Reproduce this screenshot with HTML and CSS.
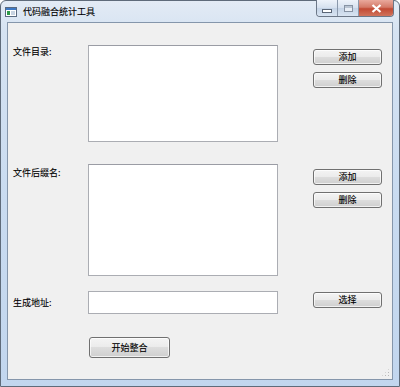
FILE: index.html
```html
<!DOCTYPE html>
<html>
<head>
<meta charset="utf-8">
<link rel="stylesheet" href="styles.css">
</head>
<body>
<div class="window">
  <div class="titlebar">
    <svg class="appicon" width="12" height="10" viewBox="0 0 12 10">
      <rect x="0.5" y="0.5" width="11" height="9" fill="#fff" stroke="#5a6a80"/>
      <rect x="1" y="1" width="10" height="2" fill="#3f79c4"/>
      <rect x="2" y="4" width="3" height="4" fill="#2e9a48"/>
      <rect x="6" y="4" width="4" height="4" fill="#c8d4e2"/>
    </svg>
    <span class="title">代码融合统计工具</span>
    <div class="caption">
      <div class="cbtn min"><span class="glyph-min"></span></div>
      <div class="cbtn max"><span class="glyph-max"></span></div>
      <div class="cbtn close">
        <svg width="11" height="9" viewBox="0 0 11 9"><path d="M1.5 1 L9.5 8 M9.5 1 L1.5 8" stroke="#fff" stroke-width="2.2"/></svg>
      </div>
    </div>
  </div>
  <div class="client">
    <div class="form">
      <div class="row row1">
        <div class="label l1">文件目录:</div>
        <div class="listbox"></div>
        <div class="btns b1">
          <div class="btn">添加</div>
          <div class="btn">删除</div>
        </div>
      </div>

      <div class="row row2">
        <div class="label l2">文件后缀名:</div>
        <div class="listbox"></div>
        <div class="btns b2">
          <div class="btn">添加</div>
          <div class="btn">删除</div>
        </div>
      </div>

      <div class="row row3">
        <div class="label l3">生成地址:</div>
        <div class="lineedit"></div>
        <div class="btns b3">
          <div class="btn">选择</div>
        </div>
      </div>

      <div class="row row4">
        <div class="btn start">开始整合</div>
      </div>
    </div>
    <div class="grip"></div>
  </div>
</div>
</body>
</html>
```
FILE: styles.css
```css
html, body {
  margin: 0;
  padding: 0;
  width: 400px;
  height: 387px;
  overflow: hidden;
  background: #ffffff;
}
body {
  font-family: "Noto Sans CJK SC", "Noto Sans", sans-serif;
  font-size: 9px;
  color: #000;
  -webkit-text-stroke: 0.1px #000;
}
.window {
  box-sizing: border-box;
  width: 400px;
  height: 387px;
  border: 1px solid #5f6b7a;
  border-radius: 6px 6px 0 0;
  background: linear-gradient(to bottom, #e3ebf5 0px, #d6e3f2 30px, #c9dbf0 200px, #c2d6ee 387px);
  display: flex;
  flex-direction: column;
  position: relative;
}
.titlebar {
  height: 20px;
  display: flex;
  align-items: center;
  position: relative;
}
.appicon {
  margin-left: 4px;
  margin-top: 1px;
}
.title {
  margin-left: 6px;
  font-size: 9px;
  line-height: 12px;
  color: #000;
  margin-top: 1px;
}
.caption {
  position: absolute;
  right: 5px;
  top: -1px;
  display: flex;
  height: 16px;
  border: 1px solid #6c7787;
  border-top: none;
  border-radius: 0 0 4px 4px;
  overflow: hidden;
}
.cbtn {
  display: flex;
  align-items: center;
  justify-content: center;
  height: 16px;
}
.min, .max {
  width: 20px;
  background: linear-gradient(to bottom, #eef3fa 0%, #d5e0ee 50%, #c4d3e6 51%, #d8e4f2 100%);
  border-right: 1px solid #8a98ab;
}
.glyph-min {
  width: 8px;
  height: 2px;
  background: #fff;
  border: 1px solid #5b6677;
  margin-top: 5px;
}
.glyph-max {
  width: 7px;
  height: 5px;
  border: 1px solid #8793a4;
  background: #e8eef6;
  box-shadow: inset 0 2px 0 #b9c4d2;
}
.close {
  width: 34px;
  background: linear-gradient(to bottom, #e9a99c 0%, #d47a68 45%, #c24a34 55%, #d0735c 100%);
}
.client {
  margin: 1px 6px 6px 6px;
  flex: 1;
  background: #f0f0f0;
  border: 1px solid #8596ab;
  position: relative;
}
.form {
  display: flex;
  flex-direction: column;
  padding: 22px 0 0 5px;
}
.row {
  display: grid;
  grid-template-columns: 75px 190px 35px 69px;
  grid-template-areas: "lab box . btn";
}
.row1 { height: 97px; }
.row2 { height: 112px; margin-top: 22px; }
.row3 { height: 23px; margin-top: 15px; }
.row4 { height: 21px; margin-top: 23px; }
.label {
  grid-area: lab;
  font-size: 9px;
  line-height: 12px;
  color: #000;
}
.l1 { padding-top: 1px; }
.l2 { padding-top: 3px; }
.l3 { align-self: center; }
.listbox {
  grid-area: box;
  box-sizing: border-box;
  background: #fff;
  border: 1px solid #abadb3;
  border-top-color: #9a9ca4;
}
.lineedit {
  grid-area: box;
  box-sizing: border-box;
  background: #fff;
  border: 1px solid #abadb3;
}
.btns {
  grid-area: btn;
  display: flex;
  flex-direction: column;
  gap: 7px;
}
.b1 { padding-top: 4px; }
.b2 { padding-top: 5px; }
.b3 { padding-top: 1px; }
.btn {
  box-sizing: border-box;
  height: 16px;
  border: 1px solid #707070;
  border-radius: 3px;
  background: linear-gradient(to bottom, #f4f4f4 0%, #ebebeb 49%, #dddddd 50%, #cfcfcf 100%);
  box-shadow: inset 0 0 0 1px rgba(255,255,255,0.7);
  display: flex;
  align-items: center;
  justify-content: center;
  font-size: 9px;
  line-height: 12px;
  color: #000;
}
.start {
  grid-area: box;
  margin-left: 1px;
  width: 81px;
  height: 21px;
}
.grip {
  position: absolute;
  right: 2px;
  bottom: 2px;
  width: 9px;
  height: 9px;
  background:
    radial-gradient(circle, #b8b8b8 0.8px, transparent 1px) 0 0 / 3px 3px;
  clip-path: polygon(100% 0, 100% 100%, 0 100%);
}
```
